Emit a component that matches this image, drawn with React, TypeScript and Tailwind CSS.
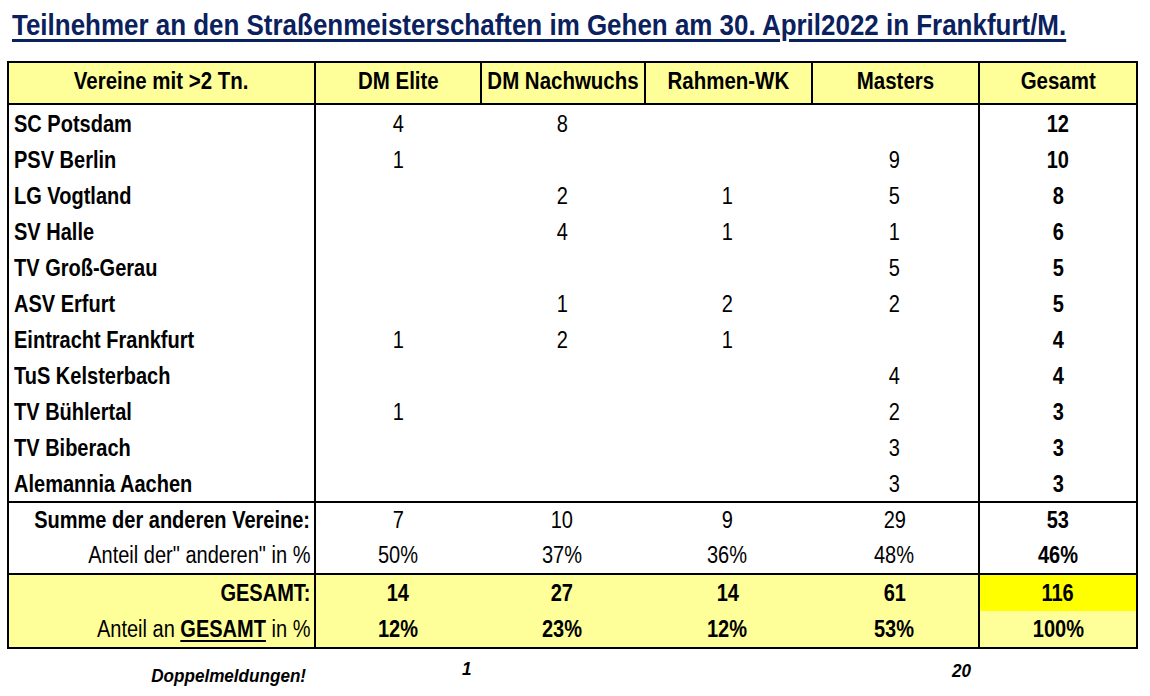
import React from 'react';

const font = { fontFamily: '"Liberation Sans", Arial, sans-serif' };

type Club = { name: string; vals: (number | null)[]; total: number };

const clubs: Club[] = [
  { name: 'SC Potsdam', vals: [4, 8, null, null], total: 12 },
  { name: 'PSV Berlin', vals: [1, null, null, 9], total: 10 },
  { name: 'LG Vogtland', vals: [null, 2, 1, 5], total: 8 },
  { name: 'SV Halle', vals: [null, 4, 1, 1], total: 6 },
  { name: 'TV Groß-Gerau', vals: [null, null, null, 5], total: 5 },
  { name: 'ASV Erfurt', vals: [null, 1, 2, 2], total: 5 },
  { name: 'Eintracht Frankfurt', vals: [1, 2, 1, null], total: 4 },
  { name: 'TuS Kelsterbach', vals: [null, null, null, 4], total: 4 },
  { name: 'TV Bühlertal', vals: [1, null, null, 2], total: 3 },
  { name: 'TV Biberach', vals: [null, null, null, 3], total: 3 },
  { name: 'Alemannia Aachen', vals: [null, null, null, 3], total: 3 },
];

const cols = 'grid grid-cols-[305px_166px_164px_167px_167px_158px]';

// narrow text (Arial Narrow look) built from Liberation Sans
function N({ children, o = 'c', s = 'b' }: { children: React.ReactNode; o?: 'l' | 'c' | 'r'; s?: 'b' | 'h' | 'f' }) {
  const origin = o === 'l' ? 'origin-left' : o === 'r' ? 'origin-right' : 'origin-center';
  const scale = s === 'h' ? 'scale-x-[0.89]' : s === 'f' ? 'scale-x-[0.9]' : 'scale-x-[0.87]';
  return <span className={`inline-block whitespace-nowrap ${scale} ${origin}`}>{children}</span>;
}

function Header() {
  const heads = ['DM Elite', 'DM Nachwuchs', 'Rahmen-WK', 'Masters', 'Gesamt'];
  return (
    <div className={`${cols} h-[42px] border-b-2 border-black bg-[#ffff99] font-bold text-[23px] leading-none`}>
      <div className="flex items-center justify-center pb-[3px]">
        <N s="h">Vereine mit &gt;2 Tn.</N>
      </div>
      {heads.map((h) => (
        <div key={h} className="flex items-center justify-center border-l-2 border-black pb-[3px]">
          <N s="h">{h}</N>
        </div>
      ))}
    </div>
  );
}

function ClubRow({ club }: { club: Club }) {
  return (
    <div className={`${cols} h-[36px] text-[23px] leading-none`}>
      <div className="flex items-center pl-[5px] font-bold pt-[2px]">
        <N o="l">{club.name}</N>
      </div>
      {club.vals.map((v, i) => (
        <div
          key={i}
          className={`flex items-center justify-center pt-[2px] ${i === 0 ? 'border-l-2 border-black' : ''}`}
        >
          <N>{v ?? ''}</N>
        </div>
      ))}
      <div className="flex items-center justify-center border-l-2 border-black font-bold pt-[2px]">
        <N>{club.total}</N>
      </div>
    </div>
  );
}

function SumRow({
  label,
  vals,
  total,
  labelBold,
  valsBold,
  h,
  totalBg,
}: {
  label: React.ReactNode;
  vals: string[];
  total: string;
  labelBold?: boolean;
  valsBold?: boolean;
  h: string;
  totalBg?: string;
}) {
  return (
    <div className={`${cols} ${h} text-[23px] leading-none`}>
      <div className={`flex items-center justify-end pr-[4px] ${labelBold ? 'font-bold' : ''}`}>
        <N o="r">{label}</N>
      </div>
      {vals.map((v, i) => (
        <div
          key={i}
          className={`flex items-center justify-center ${i === 0 ? 'border-l-2 border-black' : ''} ${valsBold ? 'font-bold' : ''}`}
        >
          <N>{v}</N>
        </div>
      ))}
      <div className={`flex items-center justify-center border-l-2 border-black font-bold ${totalBg ?? ''}`}>
        <N>{total}</N>
      </div>
    </div>
  );
}

export default function App() {
  return (
    <div className="w-[1150px] h-[696px] overflow-hidden bg-white text-black" style={font}>
      <div className="pl-[12px] pt-[10px] h-[61px] overflow-hidden">
        <h1 className="text-[30px] font-bold text-[#0a215e] leading-none">
          <span className="inline-block whitespace-nowrap scale-x-[0.865] origin-left underline decoration-[3px] underline-offset-[4px]">
            Teilnehmer an den Straßenmeisterschaften im Gehen am 30. April2022 in Frankfurt/M.
          </span>
        </h1>
      </div>

      <div className="ml-[7px] w-[1131px] border-2 border-black">
        <Header />
        {clubs.map((c) => (
          <ClubRow key={c.name} club={c} />
        ))}
        <div className="border-t-2 border-black">
          <SumRow label="Summe der anderen Vereine:" labelBold vals={['7', '10', '9', '29']} total="53" h="h-[35px]" />
          <SumRow label={'Anteil der" anderen" in %'} vals={['50%', '37%', '36%', '48%']} total="46%" h="h-[35px]" />
        </div>
        <div className="border-t-2 border-black bg-[#ffff99]">
          <SumRow
            label="GESAMT:"
            labelBold
            valsBold
            vals={['14', '27', '14', '61']}
            total="116"
            h="h-[36px]"
            totalBg="bg-[#ffff00]"
          />
          <SumRow
            label={
              <span>
                Anteil an <span className="font-bold underline decoration-[2px] underline-offset-[3px]">GESAMT</span> in %
              </span>
            }
            valsBold
            vals={['12%', '23%', '12%', '53%']}
            total="100%"
            h="h-[36px]"
          />
        </div>
      </div>

      <div className={`${cols} ml-[9px] h-[40px] italic font-bold text-[19px] leading-none`}>
        <div className="flex items-end justify-end pr-[8px] pb-[4px]">
          <N o="r" s="f">Doppelmeldungen!</N>
        </div>
        <div className="flex items-center justify-end pr-[8px] pb-[2px]">
          <N o="r" s="f">1</N>
        </div>
        <div />
        <div />
        <div className="flex items-center justify-end pr-[7px] pt-[2px]">
          <N o="r" s="f">20</N>
        </div>
        <div />
      </div>
    </div>
  );
}
